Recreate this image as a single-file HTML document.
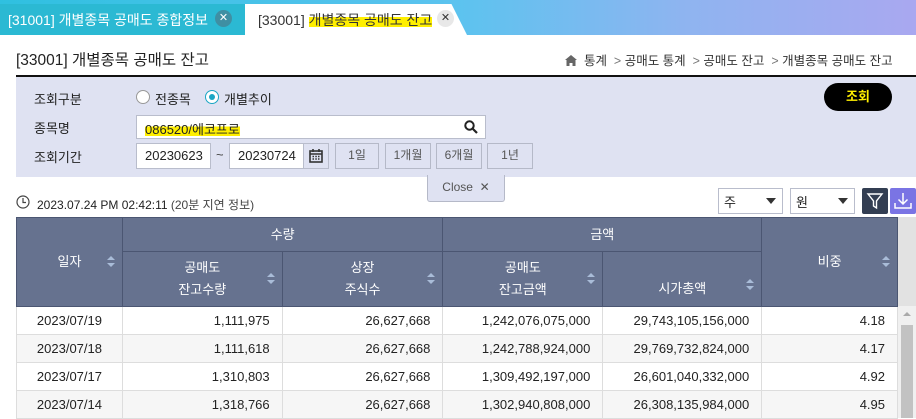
<!DOCTYPE html>
<html><head><meta charset="utf-8"><style>
*{margin:0;padding:0;box-sizing:border-box}
body{width:916px;height:418px;overflow:hidden;background:#fff;font-family:"Liberation Sans","Noto Sans CJK KR",sans-serif;font-size:13px;color:#222;position:relative}
.abs{position:absolute}
.hl{background:linear-gradient(180deg,transparent 30%,#ffef00 30%,#ffef00 95%,transparent 95%)}
.tabbar{left:0;top:0;width:916px;height:35px;background:linear-gradient(90deg,#2fc0e0 0%,#5cc3ef 50%,#8fb4f0 75%,#a9a8f0 100%)}
.tab1{left:0;top:4px;width:245px;height:31px;background:#2bb9d3;color:#fff;font-size:14px;padding:6px 0 0 8px}
.tab2{left:245px;top:4px;width:222px;height:31px;background:#fff;clip-path:polygon(0 0,93% 0,100% 100%,0 100%);font-size:14px;padding:6px 0 0 13px;color:#333}
.x{width:17px;height:17px;border-radius:50%;text-align:center;font-size:11px;line-height:17px}
.panel{left:16px;top:75px;width:900px;height:102px;background:#dfe2f2;border-top:2px solid #111}
.lbl{font-size:13px;color:#222}
.inp{background:#fff;border:1px solid #b9bdcc;height:24px;font-size:13px;padding:4px 8px}
.btn{background:#dfe2f2;border:1px solid #b5b9c8;height:24px;font-size:12px;color:#555;text-align:center;line-height:22px}
table{border-collapse:collapse;position:absolute;left:16px;top:217px;width:882px;font-size:13px}
th{background:#66728f;color:#fff;font-weight:normal;border:1px solid #4b5672;position:relative;font-size:13px;line-height:22px}
td{height:28px;border:1px solid #ddd;text-align:right;padding-right:12px}
tr.g td{background:#f6f6f6}
.s{position:absolute;right:7px;top:50%;margin-top:-6px;width:0;border-left:4px solid transparent;border-right:4px solid transparent}
.s:before{content:"";position:absolute;left:-4px;top:0;border-left:4px solid transparent;border-right:4px solid transparent;border-bottom:4px solid #a9bcd8}
.s:after{content:"";position:absolute;left:-4px;top:7px;border-left:4px solid transparent;border-right:4px solid transparent;border-top:4px solid #a9bcd8}
</style></head><body>
<div class="abs tabbar"></div>
<div class="abs tab1">[31001] 개별종목 공매도 종합정보</div>
<div class="abs x" style="left:215px;top:10px;background:#3f8fa3;color:#fff">✕</div>
<div class="abs tab2">[33001] <span class="hl">개별종목 공매도 잔고</span></div>
<div class="abs x" style="left:437px;top:10px;background:#e8e8e8;color:#333">✕</div>

<div class="abs" style="left:16px;top:48px;font-size:15.5px;color:#222">[33001] 개별종목 공매도 잔고</div>
<div class="abs" style="left:565px;top:50px;font-size:12.5px;color:#333;white-space:nowrap">
<svg width="12" height="11" viewBox="0 0 12 11" style="vertical-align:-1px"><path d="M6 0L0 5h1.5v6h3V8h3v3h3V5H12z" fill="#666"/></svg>&nbsp; 통계 &nbsp;<span style="color:#777">&gt;</span> 공매도 통계 &nbsp;<span style="color:#777">&gt;</span> 공매도 잔고 &nbsp;<span style="color:#777">&gt;</span> 개별종목 공매도 잔고</div>

<div class="abs panel"></div>
<div class="abs lbl" style="left:34px;top:89px">조회구분</div>
<div class="abs" style="left:136px;top:90px;width:14px;height:14px;border:1px solid #999;border-radius:50%;background:#fff"></div>
<div class="abs lbl" style="left:155px;top:89px">전종목</div>
<div class="abs" style="left:205px;top:90px;width:14px;height:14px;border:1px solid #1aa6c4;border-radius:50%;background:#fff"><div style="width:6px;height:6px;border-radius:50%;background:#1aa6c4;margin:3px"></div></div>
<div class="abs lbl" style="left:224px;top:89px">개별추이</div>
<div class="abs" style="left:824px;top:83px;width:68px;height:28px;border-radius:14px;background:#000;color:#ffef00;font-weight:bold;text-align:center;line-height:28px;font-size:13px">조회</div>
<div class="abs lbl" style="left:34px;top:118px">종목명</div>
<div class="abs inp" style="left:136px;top:115px;width:350px;height:24px;padding:3px 8px"><span class="hl">086520/에코프로</span></div>
<svg class="abs" style="left:464px;top:120px" width="14" height="14" viewBox="0 0 14 14"><circle cx="5.5" cy="5.5" r="4.2" fill="none" stroke="#222" stroke-width="2"/><path d="M8.5 8.5L13 13" stroke="#222" stroke-width="2.2"/></svg>
<div class="abs lbl" style="left:34px;top:147px">조회기간</div>
<div class="abs inp" style="left:136px;top:143px;width:75px;height:26px">20230623</div>
<div class="abs" style="left:216px;top:147px;color:#444">~</div>
<div class="abs inp" style="left:229px;top:143px;width:75px;height:26px">20230724</div>
<div class="abs btn" style="left:303px;top:143px;width:26px;height:26px;border-color:#b9bdcc"><svg width="14" height="14" viewBox="0 0 14 14" style="margin-top:5px"><rect x="1" y="2" width="12" height="11" fill="none" stroke="#333" stroke-width="1.6"/><path d="M1 5h12M4 0v3M10 0v3" stroke="#333" stroke-width="1.6"/><path d="M3.5 7.5h1.5M6.3 7.5h1.5M9 7.5h1.5M3.5 10h1.5M6.3 10h1.5M9 10h1.5" stroke="#333" stroke-width="1.4"/></svg></div>
<div class="abs btn" style="left:335px;top:143px;width:44px;height:26px">1일</div>
<div class="abs btn" style="left:385px;top:143px;width:46px;height:26px">1개월</div>
<div class="abs btn" style="left:436px;top:143px;width:46px;height:26px">6개월</div>
<div class="abs btn" style="left:487px;top:143px;width:46px;height:26px">1년</div>
<div class="abs" style="left:427px;top:175px;width:78px;height:27px;background:#dfe2f2;border:1px solid #b5b9c8;border-top:none;border-radius:0 0 3px 3px;font-size:12px;color:#555;text-align:center;line-height:24px">Close &nbsp;✕</div>

<svg class="abs" style="left:16px;top:195px" width="14" height="14" viewBox="0 0 14 14"><circle cx="7" cy="7" r="6" fill="none" stroke="#444" stroke-width="1.2"/><path d="M7 3v4.5h3" fill="none" stroke="#444" stroke-width="1.2"/></svg>
<div class="abs" style="left:37px;top:196px;font-size:12px;color:#222">2023.07.24 PM 02:42:11 <span style="color:#444">(20분 지연 정보)</span></div>
<div class="abs inp" style="left:718px;top:188px;width:65px;height:26px;padding:3px 5px;font-size:13px">주</div>
<div class="abs" style="left:766px;top:198px;border-left:5px solid transparent;border-right:5px solid transparent;border-top:6px solid #333"></div>
<div class="abs inp" style="left:790px;top:188px;width:65px;height:26px;padding:3px 5px;font-size:13px">원</div>
<div class="abs" style="left:838px;top:198px;border-left:5px solid transparent;border-right:5px solid transparent;border-top:6px solid #333"></div>
<div class="abs" style="left:862px;top:188px;width:26px;height:26px;background:#333e52;border-radius:2px"><svg width="26" height="26" viewBox="0 0 26 26"><path d="M6 6h14l-5.5 7v7l-3-2v-5z" fill="none" stroke="#fff" stroke-width="1.4"/></svg></div>
<div class="abs" style="left:890px;top:188px;width:26px;height:26px;background:#7a74e4;border-radius:2px"><svg width="26" height="26" viewBox="0 0 26 26"><path d="M13 5v11M8.5 11.5L13 16l4.5-4.5M5 15v5h16v-5" fill="none" stroke="#fff" stroke-width="1.5"/></svg></div>

<table>
<tr style="height:34px"><th rowspan="2" style="width:106px">일자<span class="s"></span></th><th colspan="2">수량</th><th colspan="2">금액</th><th rowspan="2" style="width:136px">비중<span class="s"></span></th></tr>
<tr style="height:55px"><th style="width:160px">공매도<br>잔고수량<span class="s"></span></th><th style="width:161px">상장<br>주식수<span class="s"></span></th><th style="width:160px">공매도<br>잔고금액<span class="s"></span></th><th style="width:159px;padding-top:20px">시가총액<span class="s" style="margin-top:0"></span></th></tr>
<tr><td style="text-align:center;padding:0">2023/07/19</td><td>1,111,975</td><td>26,627,668</td><td>1,242,076,075,000</td><td>29,743,105,156,000</td><td>4.18</td></tr>
<tr class="g"><td style="text-align:center;padding:0">2023/07/18</td><td>1,111,618</td><td>26,627,668</td><td>1,242,788,924,000</td><td>29,769,732,824,000</td><td>4.17</td></tr>
<tr><td style="text-align:center;padding:0">2023/07/17</td><td>1,310,803</td><td>26,627,668</td><td>1,309,492,197,000</td><td>26,601,040,332,000</td><td>4.92</td></tr>
<tr class="g"><td style="text-align:center;padding:0">2023/07/14</td><td>1,318,766</td><td>26,627,668</td><td>1,302,940,808,000</td><td>26,308,135,984,000</td><td>4.95</td></tr>
</table>
<div class="abs" style="left:898px;top:217px;width:18px;height:89px;background:#e2e2e2"></div>
<div class="abs" style="left:898px;top:306px;width:18px;height:112px;background:#f0f0f0"></div>
<div class="abs" style="left:901px;top:325px;width:12px;height:93px;background:#c2c2c2"></div>
<div class="abs" style="left:903px;top:312px;border-left:4px solid transparent;border-right:4px solid transparent;border-bottom:4px solid #aaa"></div>
</body></html>
